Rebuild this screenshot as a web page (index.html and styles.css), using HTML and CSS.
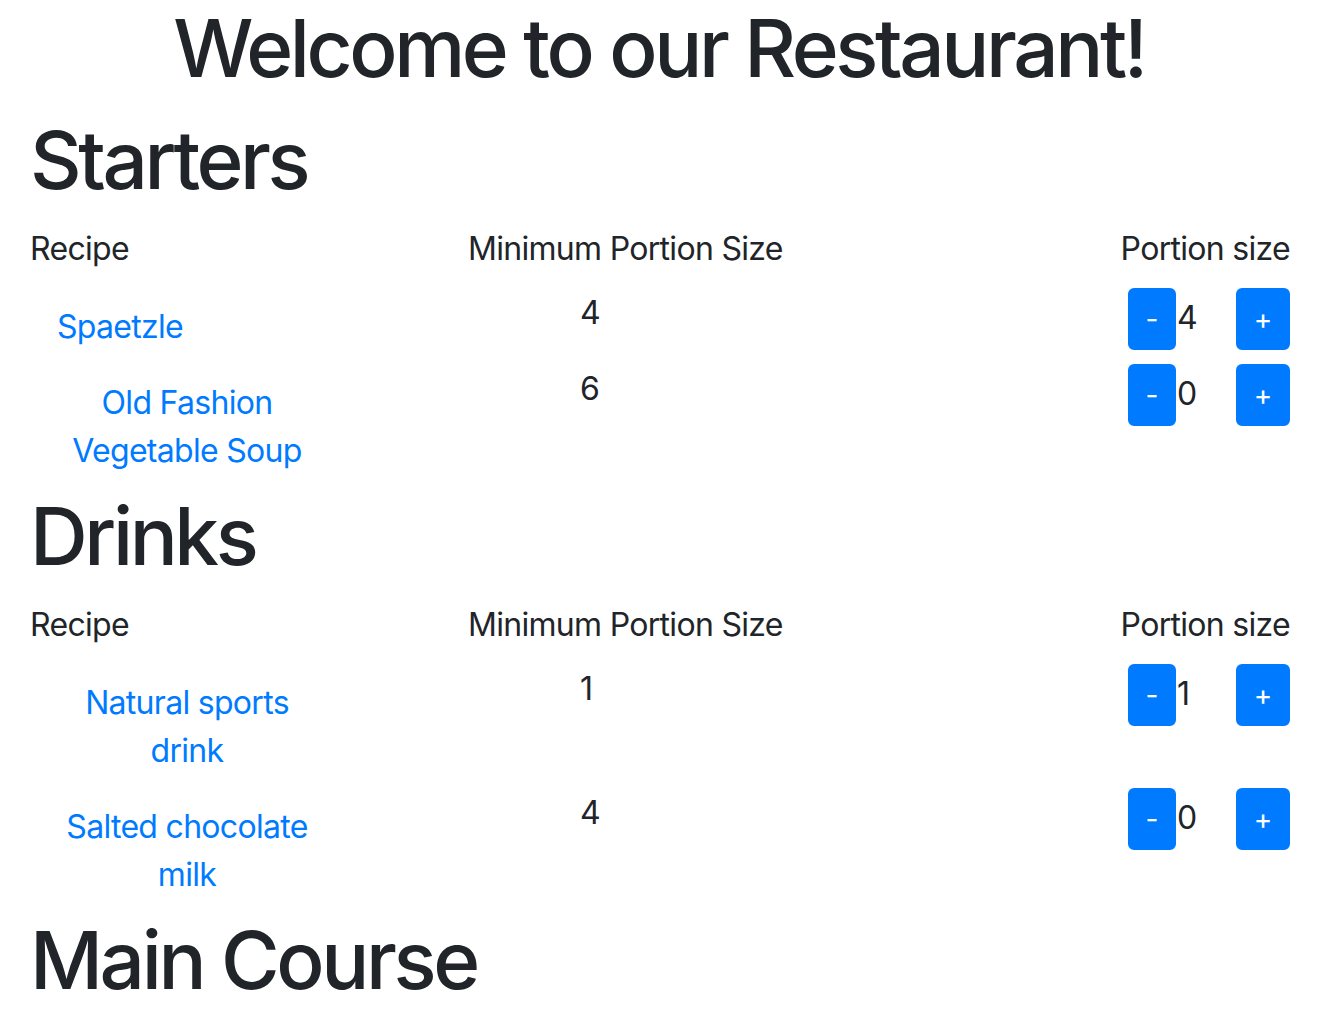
FILE: index.html
```html
<!DOCTYPE html>
<html lang="en">
<head>
<meta charset="utf-8">
<title>Restaurant</title>
<link rel="stylesheet" href="styles.css">
</head>
<body>
  <h1 class="page-title">Welcome to our Restaurant!</h1>

  <section class="course">
    <h1 class="course-title">Starters</h1>
    <div class="menu-table">
      <div class="th th-recipe">Recipe</div>
      <div class="th th-min">Minimum Portion Size</div>
      <div class="th th-portion">Portion size</div>

      <div class="td td-recipe"><a class="recipe-name recipe-name-left" href="#">Spaetzle</a></div>
      <div class="td td-min">4</div>
      <div class="td td-portion">
        <div class="stepper"><button class="btn btn-minus">-</button><span class="qty">4</span><button class="btn btn-plus">+</button></div>
      </div>

      <div class="td td-recipe"><a class="recipe-name" href="#">Old Fashion Vegetable Soup</a></div>
      <div class="td td-min">6</div>
      <div class="td td-portion">
        <div class="stepper"><button class="btn btn-minus">-</button><span class="qty">0</span><button class="btn btn-plus">+</button></div>
      </div>
    </div>
  </section>

  <section class="course">
    <h1 class="course-title">Drinks</h1>
    <div class="menu-table">
      <div class="th th-recipe">Recipe</div>
      <div class="th th-min">Minimum Portion Size</div>
      <div class="th th-portion">Portion size</div>

      <div class="td td-recipe"><a class="recipe-name" href="#">Natural sports drink</a></div>
      <div class="td td-min">1</div>
      <div class="td td-portion">
        <div class="stepper"><button class="btn btn-minus">-</button><span class="qty">1</span><button class="btn btn-plus">+</button></div>
      </div>

      <div class="td td-recipe"><a class="recipe-name" href="#">Salted chocolate milk</a></div>
      <div class="td td-min">4</div>
      <div class="td td-portion">
        <div class="stepper"><button class="btn btn-minus">-</button><span class="qty">0</span><button class="btn btn-plus">+</button></div>
      </div>
    </div>
  </section>

  <section class="course">
    <h1 class="course-title">Main Course</h1>
  </section>
</body>
</html>
```

FILE: styles.css
```css
html, body {
  margin: 0;
  padding: 0;
  background: #ffffff;
}

body {
  font-family: Inter, "Noto Sans", "Liberation Sans", sans-serif;
  font-size: 32px;
  line-height: 48px;
  color: #212529;
  letter-spacing: -0.7px;
}

.page-title,
.course-title {
  margin: 0 0 16px 0;
  font-size: 80px;
  line-height: 96px;
  font-weight: 500;
  letter-spacing: -3.4px;
}

.page-title {
  text-align: center;
}

.course-title {
  padding-left: 30px;
}

.menu-table {
  display: grid;
  grid-template-columns: 438px 1fr auto;
  padding: 0 28px 0 30px;
}

.th {
  margin-bottom: 15px;
  padding-top: 1px;
  font-weight: 400;
}

.th-portion {
  text-align: right;
}

.td-recipe {
  padding: 15px 0 13px 27px;
}

.recipe-name {
  display: block;
  width: 260px;
  text-align: center;
  color: #007bff;
  text-decoration: none;
}

.recipe-name-left {
  text-align: left;
}

.td-min {
  padding-left: 112px;
  padding-top: 1px;
}

.td-portion {
  display: flex;
  justify-content: flex-end;
}

.stepper {
  display: flex;
  align-items: baseline;
  height: 62px;
}

.btn {
  box-sizing: border-box;
  height: 62px;
  padding: 8px 0;
  border: 2px solid #007bff;
  border-radius: 6px;
  background: #007bff;
  color: #ffffff;
  font-family: inherit;
  font-size: 28px;
  line-height: 42px;
  text-align: center;
}

.btn-minus {
  width: 48px;
}

.btn-plus {
  width: 54px;
}

.qty {
  display: inline-block;
  width: 60px;
  padding-left: 1px;
  box-sizing: border-box;
  font-size: 32px;
  line-height: 48px;
}
```
